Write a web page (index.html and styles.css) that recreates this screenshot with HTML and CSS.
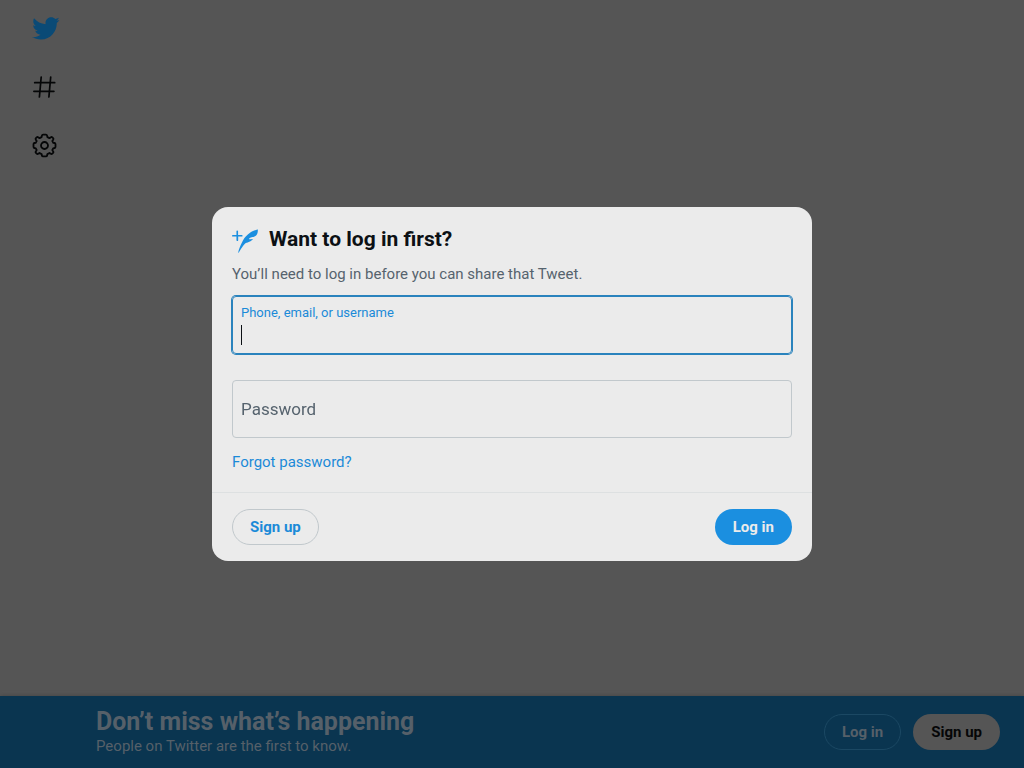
FILE: index.html
```html
<!DOCTYPE html>
<html lang="en">
<head>
<meta charset="utf-8">
<meta name="viewport" content="width=device-width, initial-scale=1">
<title>Log in to Twitter</title>
<link rel="stylesheet" href="styles.css">
</head>
<body>
<div class="page">
  <nav class="sidebar" aria-label="Primary">
    <a class="nav-link logo" href="#" aria-label="Twitter">
      <svg width="29" height="29" viewBox="0 0 24 24" fill="currentColor"><path d="M23.643 4.937c-.835.37-1.732.62-2.675.733.962-.576 1.7-1.49 2.048-2.578-.9.534-1.897.922-2.958 1.13-.85-.904-2.06-1.47-3.4-1.47-2.572 0-4.658 2.086-4.658 4.66 0 .364.042.718.12 1.06-3.873-.195-7.304-2.05-9.602-4.868-.4.69-.63 1.49-.63 2.342 0 1.616.823 3.043 2.072 3.878-.764-.025-1.482-.234-2.11-.583v.06c0 2.257 1.605 4.14 3.737 4.568-.392.106-.803.162-1.227.162-.3 0-.593-.028-.877-.082.593 1.85 2.313 3.198 4.352 3.234-1.595 1.25-3.604 1.995-5.786 1.995-.376 0-.747-.022-1.112-.065 2.062 1.323 4.51 2.093 7.14 2.093 8.57 0 13.255-7.098 13.255-13.254 0-.2-.005-.402-.014-.602.91-.658 1.7-1.477 2.323-2.41z"/></svg>
    </a>
    <a class="nav-link" href="#" aria-label="Explore">
      <svg width="26" height="26" viewBox="0 0 26 26" fill="none" stroke="currentColor" stroke-width="1.7" stroke-linecap="round"><path d="M2.7 8.7h20M1.9 17.3h20M9.2 3l-1.8 20M18.7 3l-1.8 20"/></svg>
    </a>
    <a class="nav-link" href="#" aria-label="Settings">
      <svg width="26" height="26" viewBox="-12.5 -12.5 26 26" fill="none" stroke="currentColor" stroke-width="1.8" stroke-linejoin="round"><circle r="3.5"/><path d="M-1.4-10.9H1.4Q2.4-10.9 2.6-9.9L2.9-8.4Q4-8 5-7.3L6.3-8.2Q7.1-8.8 7.8-8.1L8.6-7.3Q9.3-6.6 8.7-5.8L7.8-4.5Q8.4-3.6 8.7-2.7L10.1-2.5Q11-2.3 11-1.3V1.3Q11 2.3 10.1 2.5L8.7 2.8Q8.4 3.8 7.8 4.6L8.7 5.9Q9.3 6.7 8.6 7.4L7.8 8.2Q7.1 8.9 6.3 8.3L5 7.4Q4 8.1 2.9 8.5L2.6 10Q2.4 10.9 1.4 10.9H-1.4Q-2.4 10.9-2.6 10L-2.9 8.5Q-4 8.1-5 7.4L-6.3 8.3Q-7.1 8.9-7.8 8.2L-8.6 7.4Q-9.3 6.7-8.7 5.9L-7.8 4.6Q-8.4 3.8-8.7 2.8L-10.1 2.5Q-11 2.3-11 1.3V-1.3Q-11-2.3-10.1-2.5L-8.7-2.7Q-8.4-3.6-7.8-4.5L-8.7-5.8Q-9.3-6.6-8.6-7.3L-7.8-8.1Q-7.1-8.8-6.3-8.2L-5-7.3Q-4-8-2.9-8.4L-2.6-9.9Q-2.4-10.9-1.4-10.9Z"/></svg>
    </a>
  </nav>
  <footer class="banner">
    <div class="banner-text">
      <p class="banner-title">Don’t miss what’s happening</p>
      <p class="banner-note">People on Twitter are the first to know.</p>
    </div>
    <div class="banner-actions">
      <button class="pill pill-dim" type="button">Log in</button>
      <button class="pill pill-grey" type="button">Sign up</button>
    </div>
  </footer>
</div>
<div class="overlay">
  <form class="dialog" role="dialog" aria-modal="true" aria-labelledby="dialog-title">
    <div class="dialog-body">
      <div class="heading">
        <svg width="26" height="26" viewBox="0 -1 24 24" fill="currentColor" aria-hidden="true" overflow="visible"><path d="M8.8 7.2H5.6V3.9c0-.4-.3-.8-.8-.8s-.7.4-.7.8v3.3H.8c-.4 0-.8.3-.8.8s.3.8.8.8h3.3v3.3c0 .4.3.8.8.8s.8-.3.8-.8V8.7H9c.4 0 .8-.3.8-.8s-.5-.7-1-.7zm15-4.9v-.1h-.1c-.1 0-9.2 1.2-14.4 11.7-3.8 7.6-3.6 9.9-3.3 9.9.3.1 3.4-6.5 6.7-9.2 5.2-1.1 6.6-3.6 6.6-3.6s-1.5.2-2.1.2c-.8 0-1.4-.2-1.7-.3 1.3-1.2 2.4-1.5 3.5-1.7.9-.2 1.8-.4 3-1.2 2.2-1.6 1.9-5.5 1.8-5.7z"/></svg>
        <h1 class="title" id="dialog-title">Want to log in first?</h1>
      </div>
      <p class="note">You’ll need to log in before you can share that Tweet.</p>
      <div class="fields">
        <div class="field field-active">
          <label class="field-label" for="user">Phone, email, or username</label>
          <input class="field-input" id="user" type="text" autofocus>
          <span class="caret" aria-hidden="true"></span>
        </div>
        <div class="field">
          <input class="field-input" id="password" type="password" placeholder="Password" aria-label="Password">
        </div>
      </div>
      <a class="forgot" href="#">Forgot password?</a>
    </div>
    <div class="dialog-actions">
      <button class="pill pill-outline" type="button">Sign up</button>
      <button class="pill pill-blue" type="submit">Log in</button>
    </div>
  </form>
</div>
</body>
</html>
```
FILE: styles.css
```css
* {
  box-sizing: border-box;
}

body {
  margin: 0;
  background: #555;
  color: #0c1014;
  font-family: Roboto, "Liberation Sans", sans-serif;
  font-size: 15px;
  line-height: 20px;
}

p, h1 {
  margin: 0;
}

svg {
  display: block;
}

.page {
  display: flex;
  flex-direction: column;
  justify-content: space-between;
  min-height: 100vh;
}

.sidebar {
  display: flex;
  flex-direction: column;
  align-items: center;
  gap: 9px;
  width: 90px;
  padding-top: 3px;
}

.nav-link {
  display: grid;
  place-items: center;
  width: 50px;
  height: 50px;
  color: #050607;
}

.logo {
  color: #0a4a76;
}

.banner {
  display: flex;
  align-items: center;
  justify-content: space-between;
  min-height: 72px;
  padding: 0 24px 0 96px;
  background: #0a3550;
  color: #566069;
  box-shadow: 0 0 4px #444;
}

.banner-title {
  font-size: 25px;
  font-weight: 700;
  line-height: 28px;
}

.banner-actions {
  display: flex;
  gap: 12px;
}

.pill {
  height: 36px;
  padding: 0 17px;
  border: 1px solid transparent;
  border-radius: 18px;
  font: inherit;
  font-weight: 700;
}

.pill-dim {
  border-color: #1b4863;
  background: transparent;
  color: #566069;
}

.pill-grey {
  background: #555;
  color: #050607;
}

.pill-outline {
  border-color: #c1c8cc;
  background: transparent;
  color: #1b8ad8;
}

.pill-blue {
  background: #1b8fe0;
  color: #ebebeb;
}

.overlay {
  position: fixed;
  inset: 0;
  display: grid;
  place-items: center;
}

.dialog {
  width: 600px;
  max-width: 100%;
  border-radius: 16px;
  background: #ebebeb;
}

.dialog-body {
  padding: 19px 20px 20px;
}

.heading {
  display: flex;
  align-items: center;
  gap: 11px;
  color: #1b8fe0;
}

.title {
  color: #0c1014;
  font-size: 21px;
  line-height: 26px;
}

.note {
  padding: 12px 0;
  color: #56636e;
}

.fields {
  display: grid;
  gap: 26px;
  padding-bottom: 14px;
}

.field {
  position: relative;
  display: flex;
  flex-direction: column;
  height: 58px;
  border: 1px solid #c1c8cc;
  border-radius: 4px;
}

.field-active {
  padding-top: 8px;
  border-color: #2a83bd;
  box-shadow: 0 0 0 1px #2a83bd;
}

.field-label {
  padding: 0 8px;
  color: #1b8ad8;
  font-size: 13px;
  line-height: 16px;
}

.field-input {
  flex: 1;
  width: 100%;
  min-height: 0;
  padding: 0 8px;
  border: 0;
  outline: 0;
  background: transparent;
  color: #0c1014;
  caret-color: transparent;
  font: inherit;
  font-size: 17px;
}

.field-input::placeholder {
  color: #56636e;
  opacity: 1;
}

.caret {
  position: absolute;
  bottom: 8px;
  left: 8px;
  width: 1px;
  height: 20px;
  background: #0c1014;
}

.forgot {
  color: #1b8ad8;
  text-decoration: none;
}

.dialog-actions {
  display: flex;
  justify-content: space-between;
  padding: 16px 20px;
  border-top: 1px solid #dde0e1;
}
```
